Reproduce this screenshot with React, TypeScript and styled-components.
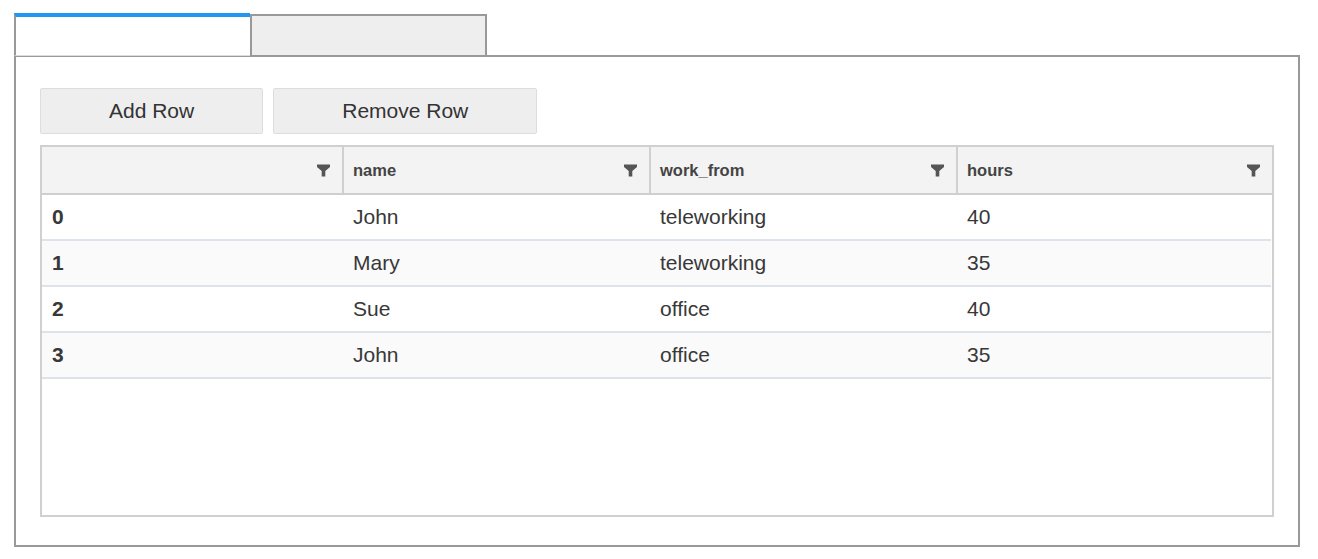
import React from "react";
import styled, { createGlobalStyle } from "styled-components";

const rows = [
  { id: 0, name: "John", work_from: "teleworking", hours: 40 },
  { id: 1, name: "Mary", work_from: "teleworking", hours: 35 },
  { id: 2, name: "Sue", work_from: "office", hours: 40 },
  { id: 3, name: "John", work_from: "office", hours: 35 },
];

const columns = ["", "name", "work_from", "hours"];

const FilterIcon = () => (
  <svg width="13" height="13" viewBox="0 0 13 13">
    <path d="M0 0.5h13v2.5L8.3 7v5.5H4.7V7L0 3z" fill="#555" />
  </svg>
);

const App = () => {
  return (
    <>
      <GlobalStyle />
      <Page>
        <TabBar>
          <Tab $active />
          <Tab />
        </TabBar>
        <Panel>
          <Toolbar>
            <Button>Add Row</Button>
            <Button>Remove Row</Button>
          </Toolbar>
          <Grid>
            <HeaderRow>
              {columns.map((c, i) => (
                <HeaderCell key={i} $last={i === columns.length - 1}>
                  <span>{c}</span>
                  <FilterIcon />
                </HeaderCell>
              ))}
            </HeaderRow>
            {rows.map((r, i) => (
              <Row key={r.id} $odd={i % 2 === 1}>
                <Cell $bold>{r.id}</Cell>
                <Cell>{r.name}</Cell>
                <Cell>{r.work_from}</Cell>
                <Cell>{r.hours}</Cell>
              </Row>
            ))}
          </Grid>
        </Panel>
      </Page>
    </>
  );
};

const GlobalStyle = createGlobalStyle`
  body {
    margin: 0;
    background: #fff;
    font-family: "Liberation Sans", Arial, sans-serif;
  }
`;

const Page = styled.div`
  padding: 14px 0 0 14px;
  width: 1286px;
`;

const TabBar = styled.div`
  display: flex;
  height: 41px;
`;

const Tab = styled.div<{ $active?: boolean }>`
  box-sizing: border-box;
  width: ${(p) => (p.$active ? "236px" : "237px")};
  background: ${(p) => (p.$active ? "#fff" : "#eee")};
  border: 2px solid #999;
  border-bottom: none;
  ${(p) =>
    p.$active &&
    `
    position: relative;
    z-index: 1;
    height: 43px;
    margin-top: -1px;
    border-top: 4px solid #2196f3;
    border-right: none;
    border-bottom: 1px solid #ddd;
  `}
`;

const Panel = styled.div`
  box-sizing: border-box;
  border: 2px solid #999;
  padding: 31px 24px 28px 24px;
`;

const Toolbar = styled.div`
  display: flex;
  gap: 10px;
`;

const Button = styled.button`
  height: 46px;
  padding: 0 68px;
  background: #eee;
  border: 1px solid #ddd;
  border-radius: 2px;
  font-family: "Liberation Sans", Arial, sans-serif;
  font-size: 21px;
  color: #333;
`;

const Grid = styled.div`
  margin-top: 11px;
  height: 372px;
  box-sizing: border-box;
  border: 2px solid #d0d0d0;
  background: #fff;
`;

const HeaderRow = styled.div`
  display: grid;
  grid-template-columns: 302px 307px 307px 1fr;
  height: 46px;
  background: #f3f3f3;
  border-bottom: 2px solid #cfcfcf;
`;

const HeaderCell = styled.div<{ $last?: boolean }>`
  display: flex;
  align-items: center;
  justify-content: space-between;
  padding: 0 12px 0 9px;
  border-right: ${(p) => (p.$last ? "none" : "2px solid #d0d0d0")};
  font-size: 16.5px;
  font-weight: bold;
  color: #444;
`;

const Row = styled.div<{ $odd?: boolean }>`
  display: grid;
  grid-template-columns: 302px 307px 307px 1fr;
  height: 44px;
  margin-right: 1px;
  background: ${(p) => (p.$odd ? "#fafafa" : "#fff")};
  border-bottom: 2px solid #dde2eb;
`;

const Cell = styled.div<{ $bold?: boolean }>`
  display: flex;
  align-items: center;
  padding-left: ${(p) => (p.$bold ? "10px" : "9px")};
  font-size: 21px;
  font-weight: ${(p) => (p.$bold ? "bold" : "normal")};
  color: #383838;
`;

export default App;
